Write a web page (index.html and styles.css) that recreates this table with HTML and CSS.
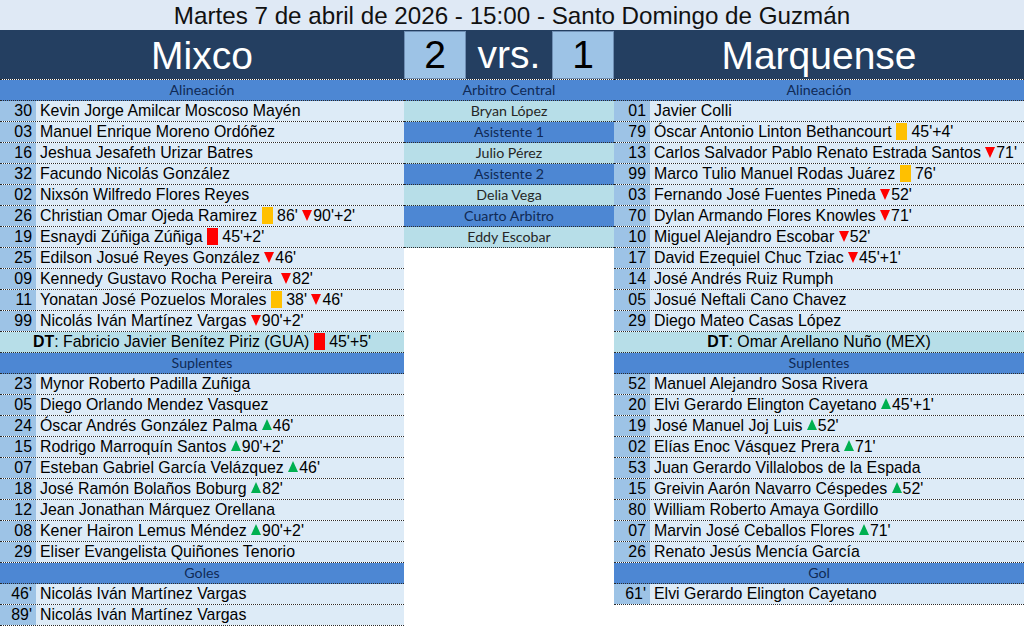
FILE: index.html
```html
<!DOCTYPE html>
<html lang="es">
<head>
<meta charset="utf-8">
<title>Mixco vs Marquense</title>
<link rel="stylesheet" href="styles.css">
</head>
<body>
<div class="title">Martes 7 de abril de 2026 - 15:00 - Santo Domingo de Guzmán</div>
<div class="header">
  <div class="team">Mixco</div>
  <div class="score">2</div>
  <div class="vrs">vrs.</div>
  <div class="score">1</div>
  <div class="team">Marquense</div>
</div>
<div class="board">
  <div class="col">
    <div class="row sec">Alineación</div>
    <div class="row"><span class="num">30</span><span class="name">Kevin Jorge Amilcar Moscoso Mayén</span></div>
    <div class="row"><span class="num">03</span><span class="name">Manuel Enrique Moreno Ordóñez</span></div>
    <div class="row"><span class="num">16</span><span class="name">Jeshua Jesafeth Urizar Batres</span></div>
    <div class="row"><span class="num">32</span><span class="name">Facundo Nicolás González</span></div>
    <div class="row"><span class="num">02</span><span class="name">Nixsón Wilfredo Flores Reyes</span></div>
    <div class="row"><span class="num">26</span><span class="name">Christian Omar Ojeda Ramirez <span class="card yellow"></span> 86' <span class="dn"></span>90'+2'</span></div>
    <div class="row"><span class="num">19</span><span class="name">Esnaydi Zúñiga Zúñiga <span class="card red"></span> 45'+2'</span></div>
    <div class="row"><span class="num">25</span><span class="name">Edilson Josué Reyes González <span class="dn"></span>46'</span></div>
    <div class="row"><span class="num">09</span><span class="name">Kennedy Gustavo Rocha Pereira &nbsp;<span class="dn"></span>82'</span></div>
    <div class="row"><span class="num">11</span><span class="name">Yonatan José Pozuelos Morales <span class="card yellow"></span> 38' <span class="dn"></span>46'</span></div>
    <div class="row"><span class="num">99</span><span class="name">Nicolás Iván Martínez Vargas <span class="dn"></span>90'+2'</span></div>
    <div class="row dt"><b>DT</b>: Fabricio Javier Benítez Piriz (GUA) <span class="card red"></span> 45'+5'</div>
    <div class="row sec">Suplentes</div>
    <div class="row"><span class="num">23</span><span class="name">Mynor Roberto Padilla Zuñiga</span></div>
    <div class="row"><span class="num">05</span><span class="name">Diego Orlando Mendez Vasquez</span></div>
    <div class="row"><span class="num">24</span><span class="name">Óscar Andrés González Palma <span class="up"></span>46'</span></div>
    <div class="row"><span class="num">15</span><span class="name">Rodrigo Marroquín Santos <span class="up"></span>90'+2'</span></div>
    <div class="row"><span class="num">07</span><span class="name">Esteban Gabriel García Velázquez <span class="up"></span>46'</span></div>
    <div class="row"><span class="num">18</span><span class="name">José Ramón Bolaños Boburg <span class="up"></span>82'</span></div>
    <div class="row"><span class="num">12</span><span class="name">Jean Jonathan Márquez Orellana</span></div>
    <div class="row"><span class="num">08</span><span class="name">Kener Hairon Lemus Méndez <span class="up"></span>90'+2'</span></div>
    <div class="row"><span class="num">29</span><span class="name">Eliser Evangelista Quiñones Tenorio</span></div>
    <div class="row sec">Goles</div>
    <div class="row"><span class="num">46'</span><span class="name">Nicolás Iván Martínez Vargas</span></div>
    <div class="row"><span class="num">89'</span><span class="name">Nicolás Iván Martínez Vargas</span></div>
  </div>
  <div class="col">
    <div class="row sec">Arbitro Central</div>
    <div class="row ref">Bryan López</div>
    <div class="row sec">Asistente 1</div>
    <div class="row ref">Julio Pérez</div>
    <div class="row sec">Asistente 2</div>
    <div class="row ref">Delia Vega</div>
    <div class="row sec">Cuarto Arbitro</div>
    <div class="row ref">Eddy Escobar</div>
  </div>
  <div class="col">
    <div class="row sec">Alineación</div>
    <div class="row"><span class="num">01</span><span class="name">Javier Colli</span></div>
    <div class="row"><span class="num">79</span><span class="name">Óscar Antonio Linton Bethancourt <span class="card yellow"></span> 45'+4'</span></div>
    <div class="row"><span class="num">13</span><span class="name">Carlos Salvador Pablo Renato Estrada Santos <span class="dn"></span>71'</span></div>
    <div class="row"><span class="num">99</span><span class="name">Marco Tulio Manuel Rodas Juárez <span class="card yellow"></span> 76'</span></div>
    <div class="row"><span class="num">03</span><span class="name">Fernando José Fuentes Pineda <span class="dn"></span>52'</span></div>
    <div class="row"><span class="num">70</span><span class="name">Dylan Armando Flores Knowles <span class="dn"></span>71'</span></div>
    <div class="row"><span class="num">10</span><span class="name">Miguel Alejandro Escobar <span class="dn"></span>52'</span></div>
    <div class="row"><span class="num">17</span><span class="name">David Ezequiel Chuc Tziac <span class="dn"></span>45'+1'</span></div>
    <div class="row"><span class="num">14</span><span class="name">José Andrés Ruiz Rumph</span></div>
    <div class="row"><span class="num">05</span><span class="name">Josué Neftali Cano Chavez</span></div>
    <div class="row"><span class="num">29</span><span class="name">Diego Mateo Casas López</span></div>
    <div class="row dt"><b>DT</b>: Omar Arellano Nuño (MEX)</div>
    <div class="row sec">Suplentes</div>
    <div class="row"><span class="num">52</span><span class="name">Manuel Alejandro Sosa Rivera</span></div>
    <div class="row"><span class="num">20</span><span class="name">Elvi Gerardo Elington Cayetano <span class="up"></span>45'+1'</span></div>
    <div class="row"><span class="num">19</span><span class="name">José Manuel Joj Luis <span class="up"></span>52'</span></div>
    <div class="row"><span class="num">02</span><span class="name">Elías Enoc Vásquez Prera <span class="up"></span>71'</span></div>
    <div class="row"><span class="num">53</span><span class="name">Juan Gerardo Villalobos de la Espada</span></div>
    <div class="row"><span class="num">15</span><span class="name">Greivin Aarón Navarro Céspedes <span class="up"></span>52'</span></div>
    <div class="row"><span class="num">80</span><span class="name">William Roberto Amaya Gordillo</span></div>
    <div class="row"><span class="num">07</span><span class="name">Marvin José Ceballos Flores <span class="up"></span>71'</span></div>
    <div class="row"><span class="num">26</span><span class="name">Renato Jesús Mencía García</span></div>
    <div class="row sec">Gol</div>
    <div class="row"><span class="num">61'</span><span class="name">Elvi Gerardo Elington Cayetano</span></div>
  </div>
</div>
</body>
</html>
```
FILE: styles.css
```css
* { box-sizing: border-box; }
html, body { margin: 0; padding: 0; background: #ffffff; }
body {
  width: 1024px;
  height: 626px;
  overflow: hidden;
  font-family: "Liberation Sans", Arial, sans-serif;
  color: #000;
}
.title {
  height: 30px;
  line-height: 32px;
  background: #dfe9f5;
  text-align: center;
  font-size: 24.2px;
  color: #111;
}
.header {
  display: grid;
  grid-template-columns: 404px 62px 86px 62px 410px;
  height: 49px;
  background: #243f61;
}
.team, .vrs, .score {
  font-size: 39px;
  line-height: 49px;
  text-align: center;
  color: #fff;
}
.team { padding-top: 1px; }
.score {
  background: #9dc3e6;
  color: #000;
  height: 48px;
  margin-top: 1px;
  line-height: 47px;
  box-shadow: inset 0 0 0 1px #6f8fb4;
}
.board {
  display: grid;
  grid-template-columns: 404px 210px 410px;
  align-items: start;
}
.col {
  display: flex;
  flex-direction: column;
  border-top: 1px dotted #2a2a2a;
}
.row {
  display: flex;
  height: 21px;
  line-height: 20px;
  border-bottom: 1px dotted #2a2a2a;
  font-size: 15.9px;
  white-space: nowrap;
  overflow: hidden;
}
.num {
  width: 36px;
  flex: none;
  background: #9dc3e6;
  text-align: right;
  padding-right: 4px;
}
.name {
  flex: 1;
  background: #ddebf7;
  padding-left: 4px;
}
.sec {
  justify-content: center;
  background: #4d87d3;
  color: #102a55;
  font-family: Lato, "Open Sans", sans-serif;
  font-size: 14.2px;
}
.ref {
  justify-content: center;
  background: #b7dee8;
  color: #262626;
  font-family: Lato, "Open Sans", sans-serif;
  font-size: 14.2px;
}
.dt {
  display: block;
  text-align: center;
  background: #b7dee8;
}
.card {
  display: inline-block;
  width: 11px;
  height: 17px;
  vertical-align: -3px;
}
.yellow { background: #ffc000; }
.red { background: #ff0000; }
.dn, .up {
  display: inline-block;
  width: 0;
  height: 0;
  border-left: 5.5px solid transparent;
  border-right: 5.5px solid transparent;
  margin-right: 1px;
}
.dn {
  border-top: 11px solid #ff0000;
  vertical-align: 0px;
}
.up {
  border-bottom: 11px solid #00b050;
  vertical-align: 1px;
}
```
